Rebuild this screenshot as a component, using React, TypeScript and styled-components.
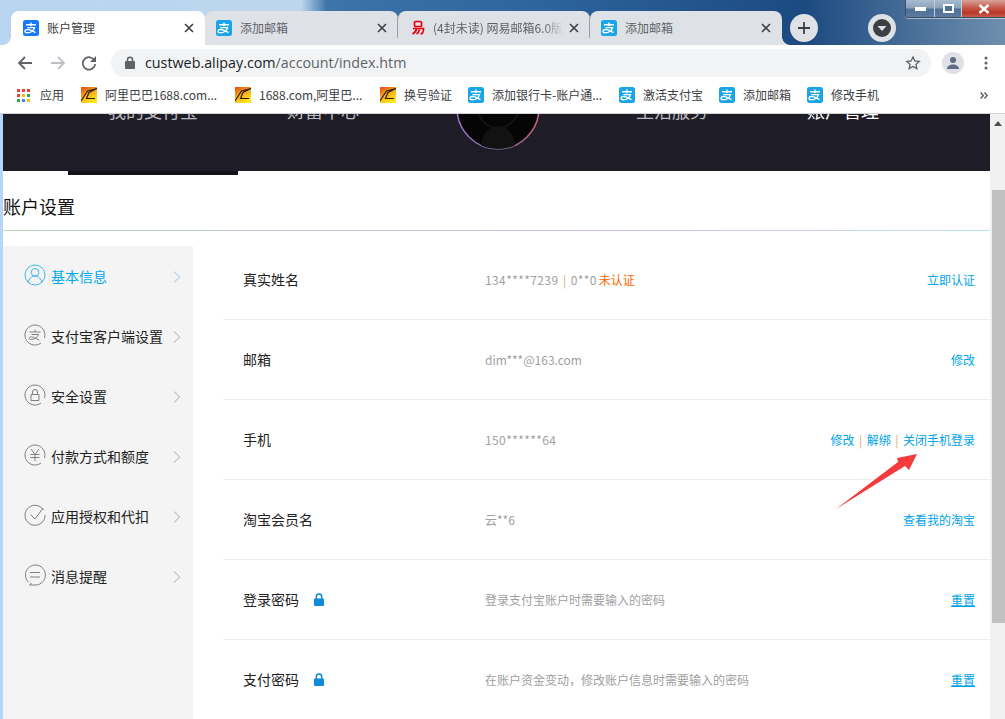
import React from "react";
import styled, { createGlobalStyle } from "styled-components";

const Global = createGlobalStyle`
  html, body { margin: 0; padding: 0; width: 1005px; height: 719px; overflow: hidden; }
  body { font-family: "Liberation Sans", "Noto Sans CJK SC", sans-serif; }
  #root { width: 1005px; height: 719px; }
`;

const CJK = `"Noto Sans CJK SC", "Liberation Sans", sans-serif`;

const Screen = styled.div`
  width: 1005px;
  height: 719px;
  display: flex;
  flex-direction: column;
  overflow: hidden;
  background: #fff;
  font-family: ${CJK};
`;

const Desktop = styled.div`
  height: 45px;
  flex: none;
  position: relative;
  display: flex;
  align-items: flex-end;
  padding-left: 11px;
  background: linear-gradient(90deg, #b8d5f0 0%, #bcd6ee 30%, #3d75a8 32.500%, #2c639b 55%, #1c4a80 80%, #6f8fae 100%);
`;

const Tab = styled.div<{ $active?: boolean; $w: number; $pad: number; $flare?: "left" | "right" }>`
  width: ${(p) => p.$w}px;
  height: 34px;
  flex: none;
  box-sizing: border-box;
  display: flex;
  align-items: center;
  padding-left: ${(p) => p.$pad}px;
  border-radius: 8px 8px 0 0;
  background: ${(p) => (p.$active ? "#fff" : "#dee1e6")};
  color: ${(p) => (p.$active ? "#3c4043" : "#5f6368")};
  font-size: 12px;
  position: relative;
  z-index: ${(p) => (p.$active ? 2 : 0)};
  &::after {
    content: "";
    display: ${(p) => (p.$flare ? "block" : "none")};
    position: absolute;
    bottom: 0;
    width: 8px;
    height: 8px;
    ${(p) => (p.$flare === "left" ? "left: -8px;" : "right: -8px;")}
    background: radial-gradient(
      circle at ${(p) => (p.$flare === "left" ? "0 0" : "100% 0")},
      transparent 7.500px,
      ${(p) => (p.$active ? "#fff" : "#dee1e6")} 8px
    );
  }
`;

const TabLabel = styled.span<{ $fade?: boolean }>`
  margin: -1px 0 0 8px;
  flex: 1;
  white-space: nowrap;
  overflow: hidden;
  ${(p) => p.$fade && "mask-image: linear-gradient(90deg, #000 85%, transparent 100%);"}
`;

const TabClose = styled.svg`
  width: 10px;
  height: 10px;
  flex: none;
  margin: 0 11px 0 6px;
`;

const TabSep = styled.div`
  width: 1px;
  height: 20px;
  flex: none;
  background: #9aa0a6;
  margin-bottom: 7px;
  margin-left: -1px;
  z-index: 1;
  align-self: flex-end;
`;

const RoundBtn = styled.div<{ $ml: number }>`
  width: 28px;
  height: 28px;
  flex: none;
  margin-left: ${(p) => p.$ml}px;
  margin-bottom: 3px;
  border-radius: 50%;
  background: #dee1e6;
  display: flex;
  align-items: center;
  justify-content: center;
`;

const WinControls = styled.div`
  position: absolute;
  top: 0;
  right: 0;
  width: 100px;
  height: 18px;
  display: flex;
  box-sizing: border-box;
  border: 1px solid #3c4c62;
  border-top: none;
  border-right: none;
  border-radius: 0 0 0 4px;
  box-shadow: 0 1px 0 rgba(255, 255, 255, 0.5);
  overflow: hidden;
`;

const WinBtn = styled.div<{ $close?: boolean; $w: number }>`
  width: ${(p) => p.$w}px;
  flex: none;
  display: flex;
  align-items: center;
  justify-content: center;
  box-sizing: border-box;
  border-right: ${(p) => (p.$close ? "none" : "1px solid #c2cfdb")};
  background: ${(p) =>
    p.$close
      ? "linear-gradient(180deg, #d9a29a 0%, #c65a4b 45%, #b83425 75%, #c4604f 100%)"
      : "linear-gradient(180deg, #a9bccf 0%, #8ba3bb 45%, #4f7097 55%, #5b7b9f 100%)"};
`;

const Toolbar = styled.div`
  height: 35px;
  flex: none;
  display: flex;
  align-items: center;
  background: #fff;
`;

const NavIcon = styled.svg`
  width: 16px;
  height: 16px;
  flex: none;
`;

const NavSlot = styled.div<{ $w: number; $pl?: number }>`
  width: ${(p) => p.$w}px;
  padding-left: ${(p) => p.$pl ?? 0}px;
  box-sizing: border-box;
  flex: none;
  display: flex;
  align-items: center;
  justify-content: center;
`;

const Omnibox = styled.div`
  width: 820px;
  height: 28px;
  flex: none;
  border-radius: 14px;
  background: #f1f3f4;
  display: flex;
  align-items: center;
  padding: 0 10px 0 14px;
  box-sizing: border-box;
`;

const Url = styled.div`
  margin-left: 10px;
  flex: 1;
  font-family: "Open Sans", "Liberation Sans", sans-serif;
  font-size: 14.300px;
  color: #5f6368;
  white-space: nowrap;
`;

const Host = styled.span`
  color: #202124;
`;

const Avatar = styled.div`
  width: 22px;
  height: 22px;
  border-radius: 50%;
  background: #dee1e6;
  margin-left: 11px;
  flex: none;
  display: flex;
  align-items: center;
  justify-content: center;
`;

const Bookmarks = styled.div`
  height: 34px;
  flex: none;
  display: flex;
  align-items: center;
  padding: 0 0 3px 17px;
  box-sizing: border-box;
  background: #fff;
  border-bottom: 1px solid #d0d2d6;
  font-size: 12px;
  color: #3c4043;
  position: relative;
`;

const Mark = styled.div<{ $w: number }>`
  width: ${(p) => p.$w}px;
  flex: none;
  display: flex;
  align-items: center;
  white-space: nowrap;
`;

const MarkLabel = styled.span<{ $ml?: number }>`
  margin: -1px 0 0 ${(p) => p.$ml ?? 8}px;
`;

const More = styled.svg`
  position: absolute;
  right: 17px;
  top: 12px;
  width: 8px;
  height: 7px;
`;

const Viewport = styled.div`
  flex: 1;
  min-height: 0;
  display: flex;
`;

const WinEdge = styled.div`
  width: 3px;
  flex: none;
  background: #b5d6f8;
`;

const Page = styled.div`
  flex: 1;
  min-width: 0;
  position: relative;
  overflow: hidden;
`;

const Hero = styled.div`
  height: 57px;
  background: #1e1c27;
  position: relative;
  font-size: 18px;
`;

const HeroNavItem = styled.span<{ $x: number; $white?: boolean }>`
  position: absolute;
  left: ${(p) => p.$x}px;
  top: -16px;
  line-height: 24px;
  white-space: nowrap;
  color: ${(p) => (p.$white ? "#fff" : "#b9b9bd")};
`;

const HeroTab = styled.div`
  position: absolute;
  left: 65px;
  bottom: -4px;
  width: 170px;
  height: 4px;
  background: #14121b;
`;

const HeroAvatar = styled.svg`
  position: absolute;
  left: 450px;
  top: -51px;
  width: 90px;
  height: 90px;
`;

const AvatarName = styled.span`
  position: absolute;
  left: 469px;
  top: -18px;
  font-size: 14px;
  line-height: 20px;
  color: #e8e8e8;
  white-space: nowrap;
`;

const SectionHead = styled.div`
  height: 60px;
  box-sizing: border-box;
  display: flex;
  align-items: center;
  padding-top: 11px;
  font-size: 18px;
  color: #111;
  border-bottom: 1px solid;
  border-image: linear-gradient(90deg, #b3dcbc 0%, #c7c6dd 30%, #d3bff0 60%, #d6c6f2 75%, #b9e4ef 100%) 1;
`;

const Columns = styled.div`
  display: flex;
  margin-top: 15px;
`;

const Side = styled.div`
  width: 190px;
  flex: none;
  height: 474px;
  background: #f4f4f4;
`;

const SideItem = styled.div<{ $active?: boolean }>`
  height: 60px;
  display: flex;
  align-items: center;
  padding-left: 21px;
  box-sizing: border-box;
  font-size: 14px;
  color: ${(p) => (p.$active ? "#00aaee" : "#222")};
`;

const SideIcon = styled.svg`
  width: 22px;
  height: 22px;
  flex: none;
  margin-top: -2px;
`;

const SideLabel = styled.span`
  margin: -1px 0 0 5px;
  flex: 1;
  white-space: nowrap;
`;

const Chevron = styled.svg`
  width: 8px;
  height: 12px;
  flex: none;
  margin-right: 12px;
  margin-top: 1px;
`;

const Rows = styled.div`
  margin-left: 30px;
  flex: 1;
  min-width: 0;
`;

const Row = styled.div`
  height: 80px;
  display: flex;
  align-items: center;
  box-sizing: border-box;
  border-bottom: 1px solid #eee;
  padding: 0 15px 0 20px;
  &:first-child { height: 74px; padding-bottom: 6px; }
  &:last-child { border-bottom: none; }
`;

const RowName = styled.div`
  width: 242px;
  flex: none;
  display: flex;
  align-items: center;
  font-size: 14px;
  color: #222;
  margin-top: -2px;
`;

const Lock = styled.svg`
  width: 10px;
  height: 13px;
  margin: 1px 0 0 15px;
  flex: none;
`;

const RowValue = styled.div`
  flex: 1;
  font-size: 12px;
  color: #a0a0a0;
  white-space: nowrap;
  margin-top: -1px;
`;

const Masked = styled.span`
  letter-spacing: 0.4px;
`;

const Warn = styled.span`
  color: #ff6600;
  margin-left: 2px;
`;

const Divider = styled.span`
  color: #e0a878;
  margin: 0 4.500px;
`;

const RowAction = styled.div`
  font-size: 12px;
  color: #00a3e8;
  white-space: nowrap;
  margin-top: -1px;
`;

const Underlined = styled.span`
  text-decoration: underline;
`;

const Arrow = styled.svg`
  position: absolute;
  left: 830px;
  top: 335px;
  width: 92px;
  height: 64px;
`;

const Scroll = styled.div`
  width: 15px;
  flex: none;
  background: #f1f1f1;
  display: flex;
  flex-direction: column;
  align-items: flex-end;
`;

const ScrollUp = styled.svg`
  width: 8px;
  height: 5px;
  margin: 7px 3px 0 0;
  flex: none;
`;

const Thumb = styled.div`
  width: 13px;
  margin-top: 64px;
  height: 433px;
  flex: none;
  background: #c1c1c1;
`;

const AliLogo = ({ size = 16, bg = "#1aa5e8" }: { size?: number; bg?: string }) => (
  <svg width={size} height={size} viewBox="0 0 16 16" style={{ flex: "none" }}>
    <rect width="16" height="16" rx="2.500" fill={bg} />
    <path d="M3 4.700h10M8 2.600v3.600M4.500 7.600h7c-.9 3-3.600 5.200-7.400 5.200-1.500 0-2.300-.8-2.100-1.700.3-1.300 2-2 4-1.500 2.200.5 4.200 1.600 6.500 3" fill="none" stroke="#fff" strokeWidth="1.400" />
  </svg>
);

const OneSixLogo = () => (
  <svg width="16" height="16" viewBox="0 0 16 16" style={{ flex: "none" }}>
    <defs>
      <linearGradient id="g168" x1="0.200" y1="0" x2="0.700" y2="1">
        <stop offset="0" stopColor="#e8561a" />
        <stop offset="0.500" stopColor="#f7b21c" />
        <stop offset="1" stopColor="#ffea20" />
      </linearGradient>
    </defs>
    <rect width="16" height="16" fill="url(#g168)" />
    <path d="M0 14 6.500 4 16 1.500 8 5.500 5.500 11.500 14 11.500" fill="none" stroke="#2a1a08" strokeWidth="1.100" />
  </svg>
);

const NeteaseLogo = () => (
  <svg width="16" height="16" viewBox="0 0 16 16" style={{ flex: "none" }}>
    <g fill="none" stroke="#e60012" strokeWidth="1.700">
      <rect x="5.500" y="1.500" width="7" height="5" rx="1" />
      <path d="M4 8.500h10.500c0 3-.8 5.500-3 5.500M7.500 9c-.5 2.500-2 4-4 5M10.500 9.500c-.5 2-1.500 3.500-3 4.500" />
    </g>
  </svg>
);

const Close = () => (
  <TabClose viewBox="0 0 10 10">
    <path d="M1 1l8 8M9 1l-8 8" stroke="#3c4043" strokeWidth="1.600" />
  </TabClose>
);

const Apps = () => (
  <svg width="13" height="13" viewBox="0 0 13 13" style={{ flex: "none" }}>
    {[
      ["#ea4335", "#ea4335", "#ea4335"],
      ["#ea4335", "#fbbc05", "#34a853"],
      ["#34a853", "#4285f4", "#fbbc05"],
    ].map((row, y) =>
      row.map((c, x) => <rect key={`${x}${y}`} x={x * 5} y={y * 5} width="3" height="3" fill={c} />)
    )}
  </svg>
);

type IconKind = "user" | "ali" | "lock" | "yen" | "check" | "msg";

const sideRing: Record<IconKind, string> = {
  user: "M11 1a10 10 0 1 1 0 20 10 10 0 0 1 0-20z",
  ali: "M17 19A10 10 0 1 1 20.500 14",
  lock: "M17 19A10 10 0 1 1 20.500 14",
  yen: "M17 19A10 10 0 1 1 20.500 14",
  check: "M19.500 6A10 10 0 1 0 21 11",
  msg: "M4.500 18.200A10 10 0 1 1 11 21H5.500l2-2",
};

const sideGlyph: Record<IconKind, string> = {
  user: "M11 4.500a3.800 3.800 0 1 1 0 7.600 3.800 3.800 0 0 1 0-7.600zM4 18.500c.6-3.600 3.500-6.300 7-6.300s6.400 2.700 7 6.300",
  ali: "M5.500 8h11M11 5.500v2.500M7.500 10.500h7c-1 3-3.500 4.800-7 5-2 .1-2.700-1-2.200-1.800.8-1.300 3-1 5 0l5 2.500",
  lock: "M7 10.500h8v6H7zM8.500 10.500V8a2.500 2.500 0 0 1 5 0v2.500",
  yen: "M7 5l4 5.500L15 5M6.500 10.500h9M6.500 13.500h9M11 10.500V17",
  check: "M6.500 10.500l4.500 4.500 8-11",
  msg: "M6 8.500h10M6 13h10",
};

const SideGlyph = ({ kind, color }: { kind: IconKind; color: string }) => (
  <SideIcon viewBox="0 0 22 22" fill="none" stroke={color} strokeWidth="1">
    <path d={sideRing[kind]} />
    <path d={sideGlyph[kind]} />
  </SideIcon>
);

const ChevronIcon = ({ color }: { color: string }) => (
  <Chevron viewBox="0 0 8 12">
    <path d="M1 .6l5.800 5.400L1 11.400" fill="none" stroke={color} strokeWidth="1" />
  </Chevron>
);

const LockIcon = () => (
  <Lock viewBox="0 0 10 13">
    <path d="M2.300 6V3.700a2.700 2.700 0 0 1 5.400 0V6" fill="none" stroke="#0d8bd6" strokeWidth="1.500" />
    <rect y="5.500" width="10" height="7.500" rx="1" fill="#0d8bd6" />
  </Lock>
);

const menu: { kind: IconKind; label: string; active?: boolean }[] = [
  { kind: "user", label: "基本信息", active: true },
  { kind: "ali", label: "支付宝客户端设置" },
  { kind: "lock", label: "安全设置" },
  { kind: "yen", label: "付款方式和额度" },
  { kind: "check", label: "应用授权和代扣" },
  { kind: "msg", label: "消息提醒" },
];

const marks: { label: string; w: number; logo: "168" | "ali" }[] = [
  { label: "阿里巴巴1688.com...", w: 154, logo: "168" },
  { label: "1688.com,阿里巴...", w: 145, logo: "168" },
  { label: "换号验证", w: 88, logo: "168" },
  { label: "添加银行卡-账户通...", w: 151, logo: "ali" },
  { label: "激活支付宝", w: 100, logo: "ali" },
  { label: "添加邮箱", w: 88, logo: "ali" },
  { label: "修改手机", w: 90, logo: "ali" },
];

export default function App() {
  return (
    <Screen>
      <Global />
      <Desktop>
        <Tab $active $w={194} $pad={12} $flare="left">
          <AliLogo bg="#1677ff" />
          <TabLabel>账户管理</TabLabel>
          <Close />
        </Tab>
        <Tab $w={193} $pad={11}>
          <AliLogo />
          <TabLabel>添加邮箱</TabLabel>
          <Close />
        </Tab>
        <TabSep />
        <Tab $w={192} $pad={11}>
          <NeteaseLogo />
          <TabLabel $fade>(4封未读) 网易邮箱6.0版</TabLabel>
          <Close />
        </Tab>
        <TabSep />
        <Tab $w={192} $pad={11} $flare="right">
          <AliLogo />
          <TabLabel>添加邮箱</TabLabel>
          <Close />
        </Tab>
        <RoundBtn $ml={8}>
          <svg width="14" height="14" viewBox="0 0 14 14">
            <path d="M7 1v12M1 7h12" stroke="#3c4043" strokeWidth="1.800" />
          </svg>
        </RoundBtn>
        <RoundBtn $ml={50}>
          <svg width="20" height="20" viewBox="0 0 20 20">
            <circle cx="10" cy="10" r="9" fill="#3c4043" />
            <path d="M5.500 8h9L10 13z" fill="#dee1e6" />
          </svg>
        </RoundBtn>
        <WinControls>
          <WinBtn $w={29}>
            <svg width="11" height="4" viewBox="0 0 11 4"><rect width="11" height="4" fill="#fff" /></svg>
          </WinBtn>
          <WinBtn $w={27}>
            <svg width="11" height="9" viewBox="0 0 11 9"><rect x="1" y="1" width="9" height="7" fill="#4f7097" stroke="#fff" strokeWidth="2" /></svg>
          </WinBtn>
          <WinBtn $close $w={44}>
            <svg width="12" height="10" viewBox="0 0 12 10"><path d="M1.500 1l9 8M10.500 1l-9 8" stroke="#fff" strokeWidth="2.500" /></svg>
          </WinBtn>
        </WinControls>
      </Desktop>
      <Toolbar>
        <NavSlot $w={50}>
          <NavIcon viewBox="0 0 16 16"><path d="M15 8H2M8 2 2 8l6 6" fill="none" stroke="#5f6368" strokeWidth="1.800" /></NavIcon>
        </NavSlot>
        <NavSlot $w={15}>
          <NavIcon viewBox="0 0 16 16"><path d="M1 8h13M8 2l6 6-6 6" fill="none" stroke="#bdc1c6" strokeWidth="1.800" /></NavIcon>
        </NavSlot>
        <NavSlot $w={46} $pl={2}>
          <NavIcon viewBox="0 0 16 16"><path d="M13.500 5.500A6.200 6.200 0 1 0 14.200 9" fill="none" stroke="#5f6368" strokeWidth="1.800" /><path d="M15 1v6H9z" fill="#5f6368" /></NavIcon>
        </NavSlot>
        <Omnibox>
          <svg width="10" height="13" viewBox="0 0 10 13" style={{ flex: "none" }}>
            <path d="M2.500 6V3.700a2.500 2.500 0 0 1 5 0V6" fill="none" stroke="#5f6368" strokeWidth="1.500" />
            <rect y="5" width="10" height="8" rx="1" fill="#5f6368" />
          </svg>
          <Url><Host>custweb.alipay.com</Host>/account/index.htm</Url>
          <svg width="16" height="16" viewBox="0 0 24 24" style={{ flex: "none" }}>
            <path d="M12 3l2.800 6 6.500.7-4.900 4.400 1.400 6.400L12 17.200l-5.800 3.300 1.400-6.400-4.900-4.400L9.200 9z" fill="none" stroke="#5f6368" strokeWidth="2" />
          </svg>
        </Omnibox>
        <Avatar>
          <svg width="14" height="14" viewBox="0 0 14 14">
            <circle cx="7" cy="4" r="3" fill="#5f6b80" />
            <path d="M1 13c0-3 3-4.500 6-4.500s6 1.500 6 4.500z" fill="#5f6b80" />
          </svg>
        </Avatar>
        <svg width="4" height="14" viewBox="0 0 4 14" style={{ flex: "none", marginLeft: 20 }}>
          <circle cx="2" cy="2" r="1.500" fill="#5f6368" />
          <circle cx="2" cy="7" r="1.500" fill="#5f6368" />
          <circle cx="2" cy="12" r="1.500" fill="#5f6368" />
        </svg>
      </Toolbar>
      <Bookmarks>
        <Mark $w={64}>
          <Apps />
          <MarkLabel $ml={10}>应用</MarkLabel>
        </Mark>
        {marks.map((m) => (
          <Mark key={m.label} $w={m.w}>
            {m.logo === "168" ? <OneSixLogo /> : <AliLogo />}
            <MarkLabel>{m.label}</MarkLabel>
          </Mark>
        ))}
        <More viewBox="0 0 8 7">
          <path d="M.7.500l2.600 3-2.600 3M4.500.500l2.600 3-2.600 3" fill="none" stroke="#5f6368" strokeWidth="1.500" />
        </More>
      </Bookmarks>
      <Viewport>
        <WinEdge />
        <Page>
          <Hero>
            <HeroNavItem $x={105}>我的支付宝</HeroNavItem>
            <HeroNavItem $x={284}>财富中心</HeroNavItem>
            <HeroNavItem $x={633}>生活服务</HeroNavItem>
            <HeroNavItem $x={804} $white>账户管理</HeroNavItem>
            <HeroTab />
            <HeroAvatar viewBox="0 0 90 90">
              <defs>
                <linearGradient id="ring" x1="0" y1="0" x2="1" y2="0">
                  <stop offset="0" stopColor="#a070c0" />
                  <stop offset="0.500" stopColor="#7070a0" />
                  <stop offset="1" stopColor="#d0607a" />
                </linearGradient>
                <clipPath id="inner">
                  <circle cx="45" cy="45" r="41" />
                </clipPath>
              </defs>
              <circle cx="45" cy="45" r="41" fill="#050505" stroke="url(#ring)" strokeWidth="1.500" />
              <g clipPath="url(#inner)">
                <circle cx="45" cy="45" r="20" fill="none" stroke="#161616" strokeWidth="1.500" />
                <path d="M27 90c0-16 7-27 18-27s18 11 18 27z" fill="#121212" />
              </g>
            </HeroAvatar>
            <AvatarName>账户名称</AvatarName>
          </Hero>
          <SectionHead>账户设置</SectionHead>
          <Columns>
            <Side>
              {menu.map((m) => (
                <SideItem key={m.label} $active={m.active}>
                  <SideGlyph kind={m.kind} color={m.active ? "#3fb4f0" : "#808080"} />
                  <SideLabel>{m.label}</SideLabel>
                  <ChevronIcon color={m.active ? "#9cc3ea" : "#a8a8a8"} />
                </SideItem>
              ))}
            </Side>
            <Rows>
              <Row>
                <RowName>真实姓名</RowName>
                <RowValue><Masked>134****7239</Masked><Divider>|</Divider><Masked>0**0</Masked><Warn>未认证</Warn></RowValue>
                <RowAction>立即认证</RowAction>
              </Row>
              <Row>
                <RowName>邮箱</RowName>
                <RowValue>dim***@163.com</RowValue>
                <RowAction>修改</RowAction>
              </Row>
              <Row>
                <RowName>手机</RowName>
                <RowValue><Masked>150******64</Masked></RowValue>
                <RowAction>修改<Divider>|</Divider>解绑<Divider>|</Divider>关闭手机登录</RowAction>
              </Row>
              <Row>
                <RowName>淘宝会员名</RowName>
                <RowValue>云**6</RowValue>
                <RowAction>查看我的淘宝</RowAction>
              </Row>
              <Row>
                <RowName>登录密码<LockIcon /></RowName>
                <RowValue>登录支付宝账户时需要输入的密码</RowValue>
                <RowAction><Underlined>重置</Underlined></RowAction>
              </Row>
              <Row>
                <RowName>支付密码<LockIcon /></RowName>
                <RowValue>在账户资金变动，修改账户信息时需要输入的密码</RowValue>
                <RowAction><Underlined>重置</Underlined></RowAction>
              </Row>
            </Rows>
          </Columns>
          <Arrow viewBox="0 0 92 64">
            <path d="M3 60 65 13 64 9 84 5 76 21 72 17z" fill="#f53b3b" />
          </Arrow>
        </Page>
        <Scroll>
          <ScrollUp viewBox="0 0 8 5">
            <path d="M4 0l4 5H0z" fill="#505050" />
          </ScrollUp>
          <Thumb />
        </Scroll>
      </Viewport>
    </Screen>
  );
}
